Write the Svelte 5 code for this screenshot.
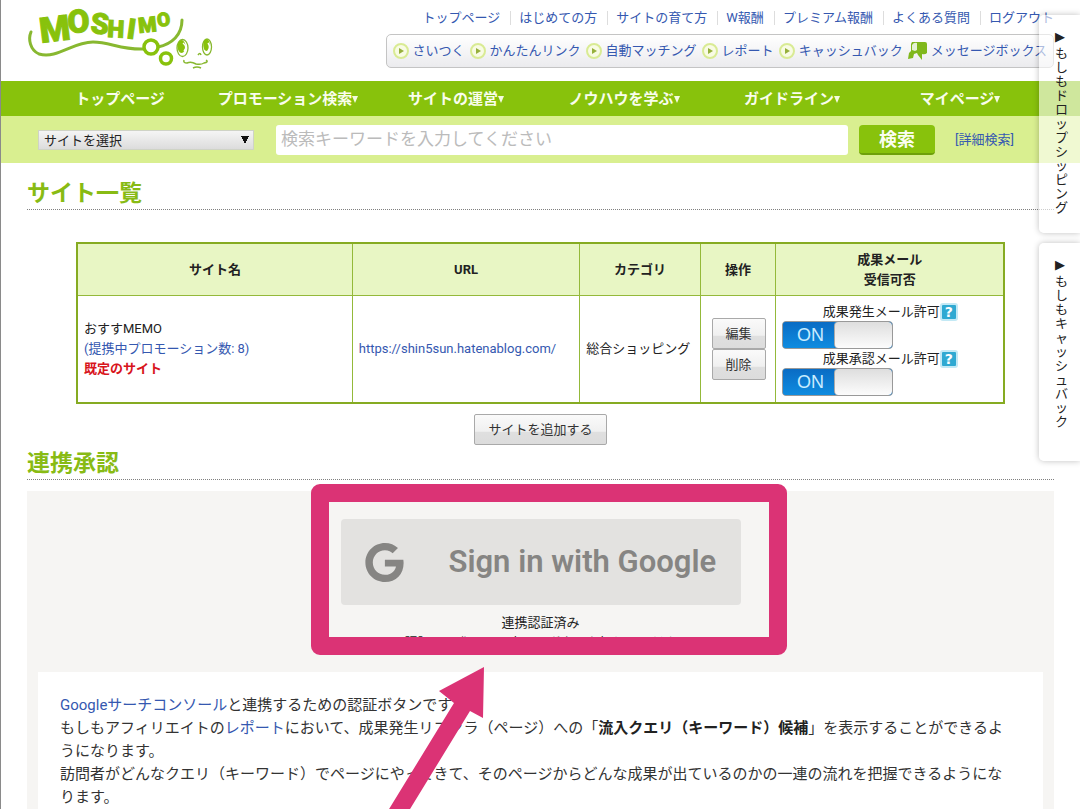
<script>
  const topLinks = ['トップページ', 'はじめての方', 'サイトの育て方', 'W報酬', 'プレミアム報酬', 'よくある質問', 'ログアウト'];
  const toolLinks = ['さいつく', 'かんたんリンク', '自動マッチング', 'レポート', 'キャッシュバック'];
  const navItems = [
    { name: 'トップページ', menu: false },
    { name: 'プロモーション検索', menu: true },
    { name: 'サイトの運営', menu: true },
    { name: 'ノウハウを学ぶ', menu: true },
    { name: 'ガイドライン', menu: true },
    { name: 'マイページ', menu: true }
  ];
  const mailSettings = [
    { id: 'mail-occur', name: '成果発生メール許可' },
    { id: 'mail-approve', name: '成果承認メール許可' }
  ];
  const sideTabs = ['もしもドロップシッピング', 'もしもキャッシュバック'];
</script>

<div class="page">
  <header>
    <a class="logo" href="#top" aria-label="MOSHIMO">
      <svg width="190" height="66" viewBox="25 5 190 66" fill="#88c20c">
        <g font-family="Roboto, sans-serif" font-weight="900" stroke="#88c20c" stroke-width="1">
          <text transform="translate(41 42) rotate(-7)" font-size="35">M</text>
          <text transform="translate(68 32) rotate(-3)" font-size="32">O</text>
          <text transform="translate(90 32) rotate(5)" font-size="29">S</text>
          <text transform="translate(107 36) rotate(3)" font-size="24">H</text>
          <text transform="translate(126 37) rotate(8)" font-size="28">I</text>
          <text transform="translate(139 32) rotate(-6)" font-size="21">M</text>
          <text transform="translate(158 26) rotate(-8)" font-size="19">O</text>
        </g>
        <g fill="none" stroke="#88b830" stroke-width="3" stroke-linecap="round">
          <path d="M31 31C28 38 30 49 39 53C58 58 72 41 93 41C110 41 121 49 144 48M158 46C172 43 182 34 182 19" />
          <circle cx="151" cy="46" r="7" stroke="#88c20c" stroke-width="3.500" fill="#fff" />
          <circle cx="166" cy="57.500" r="5.500" stroke="#88c20c" stroke-width="3.500" fill="#fff" />
        </g>
        <ellipse cx="182.500" cy="47" rx="5.500" ry="8.500" fill="#fff" stroke="#88b830" stroke-width="1.300" />
        <ellipse cx="181.500" cy="45.500" rx="4" ry="6.500" />
        <ellipse cx="207" cy="46" rx="4.500" ry="8" fill="#fff" stroke="#88b830" stroke-width="1.300" />
        <ellipse cx="206.500" cy="44" rx="3.200" ry="6" />
        <path d="M184 50Q188 46 183 42M208 50Q211 46 208 42" fill="none" stroke="#fff" stroke-width="1.500" />
        <path d="M184 59Q183 62 187 62Q191 60 196 63Q201 64 204 62Q209 61 206 59M193 67Q197 65 201 67M198 54Q200 51 201 54" fill="none" stroke="#88b830" stroke-width="1.500" />
      </svg>
    </a>
    <div class="header-links">
      <ul class="top-links">
        {#each topLinks as link}<li><a href="#top">{link}</a></li>{/each}
      </ul>
      <ul class="tools">
        {#each toolLinks as link}
          <li>
            <svg width="16" height="16" viewBox="0 0 16 16" aria-hidden="true">
              <circle cx="8" cy="8" r="7" fill="#f8fbe4" stroke="#d9eb94" stroke-width="2" />
              <path d="M6 5L11 8L6 11Z" fill="#96b03c" />
            </svg>
            <a href="#top">{link}</a>
          </li>
        {/each}
        <li>
          <svg width="19" height="18" viewBox="0 0 19 18" aria-hidden="true">
            <path d="M4 0H17Q19 0 19 2V11Q17 13 14 12V18L10 13L9 11L6 12L5 16L0 17L1 11L3 9V2Z" fill="#80b81c" />
            <path d="M4 3Q6 0 9 1V8L7 9L4 8Z" fill="#e4f2d4" />
          </svg>
          <a href="#top">メッセージボックス</a>
        </li>
      </ul>
    </div>
  </header>

  <nav>
    {#each navItems as item}
      <a href="#top">{item.name}{#if item.menu}<svg width="6" height="8" viewBox="0 0 6 8" aria-hidden="true"><path d="M0 1H6L3 8Z" fill="#f4fbdf" /></svg>{/if}</a>
    {/each}
  </nav>

  <form class="search">
    <select aria-label="サイトを選択"><option>サイトを選択</option></select>
    <input type="text" aria-label="検索キーワード" placeholder="検索キーワードを入力してください" />
    <button type="button">検索</button>
    <a href="#top">[詳細検索]</a>
  </form>

  <main>
    <h2>サイト一覧</h2>
    <table>
      <thead>
        <tr>
          <th class="c-name">サイト名</th>
          <th class="c-url">URL</th>
          <th class="c-cat">カテゴリ</th>
          <th class="c-op">操作</th>
          <th>成果メール<br />受信可否</th>
        </tr>
      </thead>
      <tbody>
        <tr>
          <td>おすすMEMO<br /><a href="#top">(提携中プロモーション数: 8)</a><br /><strong class="default">既定のサイト</strong></td>
          <td><a href="#top">https://shin5sun.hatenablog.com/</a></td>
          <td>総合ショッピング</td>
          <td>
            <div class="ops">
              <button type="button" class="plain">編集</button>
              <button type="button" class="plain">削除</button>
            </div>
          </td>
          <td>
            {#each mailSettings as setting}
              <div class="mail-label">
                <label for={setting.id}>{setting.name}</label>
                <span class="help">?</span>
              </div>
              <label class="switch">
                <input id={setting.id} type="checkbox" checked />
                <span class="on">ON</span>
                <span class="knob"></span>
              </label>
            {/each}
          </td>
        </tr>
      </tbody>
    </table>
    <div class="add"><button type="button" class="plain wide">サイトを追加する</button></div>

    <h2>連携承認</h2>
    <section class="panel">
      <button type="button" class="google">
        <svg width="39" height="39" viewBox="0 0 24 24" aria-hidden="true">
          <path fill="#868583" d="M12.240 10.285V14.400h6.806c-.275 1.765-2.056 5.174-6.806 5.174-4.095 0-7.439-3.389-7.439-7.574s3.345-7.574 7.439-7.574c2.330 0 3.891.989 4.785 1.849l3.254-3.138C18.189 1.186 15.479 0 12.240 0c-6.635 0-12 5.365-12 12s5.365 12 12 12c6.926 0 11.520-4.869 11.520-11.726 0-.788-.085-1.390-.189-1.989H12.240z" />
        </svg>
        <span>Sign in with Google</span>
      </button>
      <p class="status">連携認証済み<br />再認証する際は、再度このボタンを押してください</p>
      <div class="about">
        <p><a href="#top">Googleサーチコンソール</a>と連携するための認証ボタンです。</p>
        <p>もしもアフィリエイトの<a href="#top">レポート</a>において、成果発生リファラ（ページ）への「<strong>流入クエリ（キーワード）候補</strong>」を表示することができるようになります。</p>
        <p>訪問者がどんなクエリ（キーワード）でページにやってきて、そのページからどんな成果が出ているのかの一連の流れを把握できるようになります。</p>
      </div>
      <div class="frame"></div>
      <svg class="arrow" width="100" height="150" viewBox="0 0 100 150" aria-hidden="true">
        <path d="M98 0L97 51L84 44L21 147L0 147L68 36L53 24Z" fill="#db3375" />
      </svg>
    </section>
  </main>

  <aside>
    {#each sideTabs as tab}
      <a href="#top"><span class="mark">▶</span><span>{tab}</span></a>
    {/each}
  </aside>
</div>

<style>
  :global(body) {
    margin: 0;
    background: #fff;
  }
  :global(*) {
    box-sizing: border-box;
  }
  .page {
    position: relative;
    overflow: hidden;
    border-left: 1px solid #8a8a8a;
    font: 13px/20px Roboto, "Noto Sans CJK JP", sans-serif;
    color: #333;
  }
  a {
    color: #3558b0;
    text-decoration: none;
  }
  button,
  input,
  select {
    font: inherit;
    color: inherit;
  }
  ul,
  p,
  h2 {
    margin: 0;
    padding: 0;
    list-style: none;
  }
  svg {
    flex: none;
    overflow: visible;
  }
  header {
    display: flex;
    justify-content: space-between;
    height: 81px;
    padding: 6px 26px 0 24px;
  }
  .header-links {
    display: flex;
    flex-direction: column;
    gap: 6px;
  }
  .top-links {
    display: flex;
    justify-content: flex-end;
    padding-top: 2px;
  }
  .top-links li + li {
    margin-left: 10px;
    padding-left: 9px;
    background: linear-gradient(#ddd, #ddd) 0 50% / 1px 14px no-repeat;
  }
  .tools {
    display: flex;
    align-items: center;
    gap: 5px;
    height: 34px;
    padding: 0 6px;
    border: 1px solid #c4c4c4;
    border-radius: 5px;
    background: linear-gradient(#fff, #ebebee);
  }
  .tools li {
    display: flex;
    align-items: center;
    gap: 4px;
    white-space: nowrap;
  }
  nav {
    display: grid;
    grid-template-columns: repeat(6, 1fr);
    height: 35px;
    padding: 0 36px 0 35px;
    background: #88c20c;
  }
  nav a {
    display: flex;
    align-items: center;
    justify-content: center;
    font-size: 15px;
    font-weight: 700;
    color: #f9fdec;
    white-space: nowrap;
  }
  .search {
    display: flex;
    align-items: center;
    height: 47px;
    padding: 0 66px 0 37px;
    background: #d9ef90;
  }
  .search select {
    width: 216px;
    height: 20px;
    margin-right: 22px;
    padding: 2px 5px 0;
    border: 1px solid #cfd3c6;
    border-radius: 0;
    appearance: none;
    line-height: 16px;
    color: #222;
    background:
      linear-gradient(to bottom right, #111 50%, transparent 50%) 206px 5px / 4px 8px no-repeat,
      linear-gradient(to bottom left, #111 50%, transparent 50%) 202px 5px / 4px 8px no-repeat,
      linear-gradient(#f5f5f5, #dcdcdc);
  }
  .search input {
    flex: 1;
    min-width: 0;
    height: 30px;
    padding: 0 5px 2px;
    border: 0;
    border-radius: 3px;
    font-size: 17px;
    background: #fff;
  }
  .search input::placeholder {
    color: #bbb;
  }
  .search button {
    width: 76px;
    height: 30px;
    margin: 0 20px 0 11px;
    padding: 2px 0 0;
    border: 0;
    border-bottom: 2px solid #6ea00a;
    border-radius: 4px;
    font-size: 18px;
    font-weight: 700;
    color: #fbfef2;
    background: #88c20c;
  }
  main {
    padding: 0 26px;
  }
  h2 {
    height: 47px;
    padding-top: 16px;
    border-bottom: 1px dotted #808080;
    font-size: 23px;
    line-height: 30px;
    font-weight: 700;
    color: #88bb14;
  }
  table {
    width: calc(100% - 98px);
    margin: 32px 49px 0;
    border: 2px solid #86ab22;
    border-spacing: 0;
    table-layout: fixed;
    color: #222;
  }
  th,
  td {
    padding: 6px 5px 6px 6px;
  }
  th + th,
  td + td {
    border-left: 1px solid #94b93a;
  }
  th {
    padding: 6px 5px 5px;
    border-bottom: 1px solid #94b93a;
    background: #e8f6c4;
  }
  td {
    text-align: left;
  }
  .c-name {
    width: 29.600%;
  }
  .c-url {
    width: 24.600%;
  }
  .c-cat {
    width: 13%;
  }
  .c-op {
    width: 8.200%;
  }
  .default {
    color: #d8141c;
  }
  .plain {
    width: 54px;
    height: 31px;
    padding: 0;
    border: 1px solid #a9a9a9;
    border-radius: 2px;
    color: #333;
    background: linear-gradient(#fafafa, #f0f0f0 56%, #dfdfdf 60%, #dcdcdc);
  }
  .wide {
    width: 133px;
  }
  .ops {
    display: flex;
    flex-direction: column;
    align-items: center;
  }
  .mail-label {
    display: flex;
    align-items: center;
    justify-content: center;
    height: 19px;
  }
  .help {
    width: 18px;
    height: 18px;
    border: 2px solid #c3e9f5;
    border-radius: 3px;
    font: 700 14px/14px "DejaVu Sans", sans-serif;
    text-align: center;
    color: #fff;
    background: #2fa9d2;
  }
  .switch {
    display: flex;
    position: relative;
    width: 111px;
    height: 28px;
    border: 1px solid #999;
    border-radius: 4px;
    overflow: hidden;
    background: #0d7bd0;
  }
  .switch input {
    position: absolute;
    opacity: 0;
  }
  .on {
    width: 51px;
    padding-left: 3px;
    font: 18px/27px "Liberation Sans", sans-serif;
    text-align: center;
    color: #c9ecff;
    background: linear-gradient(#0a6cc4, #0f8ce0);
  }
  .knob {
    flex: 1;
    border-left: 1px solid #aaa;
    border-radius: 4px;
    background: linear-gradient(#dedede, #fcfcfc);
  }
  .add {
    display: flex;
    justify-content: center;
    padding: 10px 0 0;
    margin-bottom: -12px;
  }
  .panel {
    position: relative;
    display: flex;
    flex-direction: column;
    align-items: center;
    margin-top: 11px;
    padding: 28px 11px 0;
    background: #f6f5f3;
  }
  .google {
    display: flex;
    align-items: center;
    gap: 45px;
    width: 400px;
    height: 86px;
    padding: 0 24px;
    border: 0;
    border-radius: 4px;
    font-size: 31px;
    font-weight: 600;
    white-space: nowrap;
    color: #868583;
    background: #e3e2e0;
  }
  .status {
    margin: 8px 0 19px;
    text-align: center;
    color: #222;
  }
  .about {
    align-self: stretch;
    padding: 22px 26px 24px 22px;
    font-size: 15px;
    line-height: 23px;
    background: #fff;
  }
  .about strong {
    color: #222;
  }
  .frame {
    position: absolute;
    top: -7px;
    left: calc(50% - 230px);
    width: 476px;
    height: 171px;
    border: 18px solid #db3375;
    border-radius: 9px;
  }
  .arrow {
    position: absolute;
    top: 176px;
    left: calc(50% - 155px);
  }
  aside {
    position: absolute;
    top: 15px;
    right: 0;
    display: flex;
    flex-direction: column;
    gap: 10px;
  }
  aside a {
    display: flex;
    flex-direction: column;
    align-items: center;
    gap: 3px;
    width: 41px;
    height: 218px;
    padding: 15px 0 0 4px;
    border-radius: 5px 0 0 5px;
    line-height: 14px;
    color: #222;
    background: rgba(255, 255, 255, 0.6);
    box-shadow: 0 0 6px rgba(0, 0, 0, 0.25);
  }
  aside span {
    width: 13px;
    line-break: anywhere;
    word-break: break-all;
  }
  .mark {
    font-family: "DejaVu Sans", sans-serif;
  }
</style>
